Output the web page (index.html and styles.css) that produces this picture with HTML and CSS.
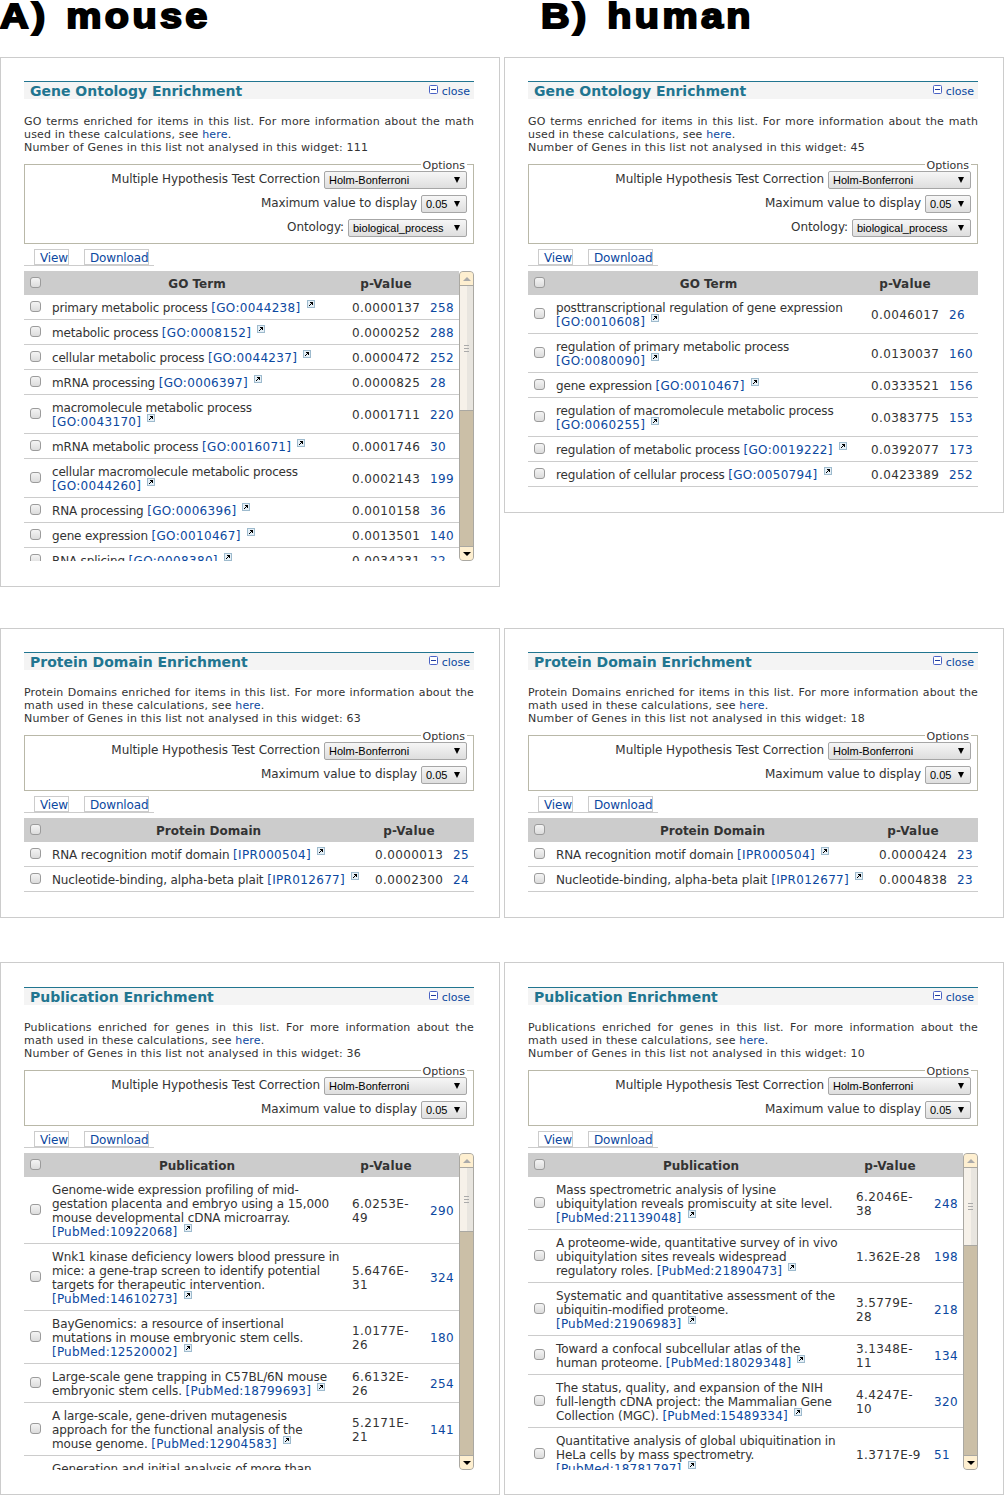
FILE: index.html
```html
<!DOCTYPE html>
<html lang="en">
<head>
<meta charset="utf-8">
<title>Enrichment widgets</title>
<link rel="stylesheet" href="styles.css">
</head>
<body>
<svg class="defs" aria-hidden="true">
<symbol id="ext" viewBox="0 0 8 8"><rect x=".5" y=".5" width="7" height="7" fill="#e6f0f7" stroke="#9dbacd"/><path d="M3 2h3v3H5V4H4v1H3v1H2V5h1V4h1V3H3z" fill="#000"/></symbol>
<symbol id="min" viewBox="0 0 9 9"><rect x=".5" y=".5" width="8" height="8" rx="1" fill="#fff" stroke="#4a62c4"/><path d="M2 4.500h5" stroke="#203a9c"/></symbol>
</svg>
<div class="titles"><h1>A) mouse</h1><h1>B) human</h1></div>

<div class="pair go">
<section class="panel">
<header><h2>Gene Ontology Enrichment</h2><a class="close"><svg><use href="#min"/></svg>close</a></header>
<div class="desc"><p class="just">GO terms enriched for items in this list. For more information about the math</p><p>used in these calculations, see <a>here</a>.</p><p>Number of Genes in this list not analysed in this widget: 111</p></div>
<fieldset><legend>Options</legend>
<div class="opt"><label>Multiple Hypothesis Test Correction</label><span class="sel w1">Holm-Bonferroni</span></div>
<div class="opt"><label>Maximum value to display</label><span class="sel w2">0.05</span></div>
<div class="opt"><label>Ontology:</label><span class="sel w3">biological_process</span></div></fieldset>
<nav><a>View</a><a>Download</a></nav>
<div class="scroll">
<table><tr><th><i class="cb"></i></th><th>GO Term</th><th>p-Value</th><th></th></tr>
<tr><td><i class="cb"></i></td><td>primary metabolic process <a>[GO:0044238]</a><svg><use href="#ext"/></svg></td><td>0.0000137</td><td>258</td></tr>
<tr><td><i class="cb"></i></td><td>metabolic process <a>[GO:0008152]</a><svg><use href="#ext"/></svg></td><td>0.0000252</td><td>288</td></tr>
<tr><td><i class="cb"></i></td><td>cellular metabolic process <a>[GO:0044237]</a><svg><use href="#ext"/></svg></td><td>0.0000472</td><td>252</td></tr>
<tr><td><i class="cb"></i></td><td>mRNA processing <a>[GO:0006397]</a><svg><use href="#ext"/></svg></td><td>0.0000825</td><td>28</td></tr>
<tr><td><i class="cb"></i></td><td>macromolecule metabolic process<br><a>[GO:0043170]</a><svg><use href="#ext"/></svg></td><td>0.0001711</td><td>220</td></tr>
<tr><td><i class="cb"></i></td><td>mRNA metabolic process <a>[GO:0016071]</a><svg><use href="#ext"/></svg></td><td>0.0001746</td><td>30</td></tr>
<tr><td><i class="cb"></i></td><td>cellular macromolecule metabolic process<br><a>[GO:0044260]</a><svg><use href="#ext"/></svg></td><td>0.0002143</td><td>199</td></tr>
<tr><td><i class="cb"></i></td><td>RNA processing <a>[GO:0006396]</a><svg><use href="#ext"/></svg></td><td>0.0010158</td><td>36</td></tr>
<tr><td><i class="cb"></i></td><td>gene expression <a>[GO:0010467]</a><svg><use href="#ext"/></svg></td><td>0.0013501</td><td>140</td></tr>
<tr><td><i class="cb"></i></td><td>RNA splicing <a>[GO:0008380]</a><svg><use href="#ext"/></svg></td><td>0.0034231</td><td>22</td></tr>
</table>
<div class="bar"><b class="up"></b><b class="thumb t1"></b><b class="down"></b></div>
</div>
</section>

<section class="panel">
<header><h2>Gene Ontology Enrichment</h2><a class="close"><svg><use href="#min"/></svg>close</a></header>
<div class="desc"><p class="just">GO terms enriched for items in this list. For more information about the math</p><p>used in these calculations, see <a>here</a>.</p><p>Number of Genes in this list not analysed in this widget: 45</p></div>
<fieldset><legend>Options</legend>
<div class="opt"><label>Multiple Hypothesis Test Correction</label><span class="sel w1">Holm-Bonferroni</span></div>
<div class="opt"><label>Maximum value to display</label><span class="sel w2">0.05</span></div>
<div class="opt"><label>Ontology:</label><span class="sel w3">biological_process</span></div></fieldset>
<nav><a>View</a><a>Download</a></nav>
<table class="wide"><tr><th><i class="cb"></i></th><th>GO Term</th><th>p-Value</th><th></th></tr>
<tr><td><i class="cb"></i></td><td>posttranscriptional regulation of gene expression<br><a>[GO:0010608]</a><svg><use href="#ext"/></svg></td><td>0.0046017</td><td>26</td></tr>
<tr><td><i class="cb"></i></td><td>regulation of primary metabolic process<br><a>[GO:0080090]</a><svg><use href="#ext"/></svg></td><td>0.0130037</td><td>160</td></tr>
<tr><td><i class="cb"></i></td><td>gene expression <a>[GO:0010467]</a><svg><use href="#ext"/></svg></td><td>0.0333521</td><td>156</td></tr>
<tr><td><i class="cb"></i></td><td>regulation of macromolecule metabolic process<br><a>[GO:0060255]</a><svg><use href="#ext"/></svg></td><td>0.0383775</td><td>153</td></tr>
<tr><td><i class="cb"></i></td><td>regulation of metabolic process <a>[GO:0019222]</a><svg><use href="#ext"/></svg></td><td>0.0392077</td><td>173</td></tr>
<tr><td><i class="cb"></i></td><td>regulation of cellular process <a>[GO:0050794]</a><svg><use href="#ext"/></svg></td><td>0.0423389</td><td>252</td></tr>
</table>
</section>
</div>

<div class="pair dom">
<section class="panel">
<header><h2>Protein Domain Enrichment</h2><a class="close"><svg><use href="#min"/></svg>close</a></header>
<div class="desc"><p class="just">Protein Domains enriched for items in this list. For more information about the</p><p>math used in these calculations, see <a>here</a>.</p><p>Number of Genes in this list not analysed in this widget: 63</p></div>
<fieldset><legend>Options</legend>
<div class="opt"><label>Multiple Hypothesis Test Correction</label><span class="sel w1">Holm-Bonferroni</span></div>
<div class="opt"><label>Maximum value to display</label><span class="sel w2">0.05</span></div></fieldset>
<nav><a>View</a><a>Download</a></nav>
<table class="full"><tr><th><i class="cb"></i></th><th>Protein Domain</th><th>p-Value</th><th></th></tr>
<tr><td><i class="cb"></i></td><td>RNA recognition motif domain <a>[IPR000504]</a><svg><use href="#ext"/></svg></td><td>0.0000013</td><td>25</td></tr>
<tr><td><i class="cb"></i></td><td>Nucleotide-binding, alpha-beta plait <a>[IPR012677]</a><svg><use href="#ext"/></svg></td><td>0.0002300</td><td>24</td></tr>
</table>
</section>
<section class="panel">
<header><h2>Protein Domain Enrichment</h2><a class="close"><svg><use href="#min"/></svg>close</a></header>
<div class="desc"><p class="just">Protein Domains enriched for items in this list. For more information about the</p><p>math used in these calculations, see <a>here</a>.</p><p>Number of Genes in this list not analysed in this widget: 18</p></div>
<fieldset><legend>Options</legend>
<div class="opt"><label>Multiple Hypothesis Test Correction</label><span class="sel w1">Holm-Bonferroni</span></div>
<div class="opt"><label>Maximum value to display</label><span class="sel w2">0.05</span></div></fieldset>
<nav><a>View</a><a>Download</a></nav>
<table class="full"><tr><th><i class="cb"></i></th><th>Protein Domain</th><th>p-Value</th><th></th></tr>
<tr><td><i class="cb"></i></td><td>RNA recognition motif domain <a>[IPR000504]</a><svg><use href="#ext"/></svg></td><td>0.0000424</td><td>23</td></tr>
<tr><td><i class="cb"></i></td><td>Nucleotide-binding, alpha-beta plait <a>[IPR012677]</a><svg><use href="#ext"/></svg></td><td>0.0004838</td><td>23</td></tr>
</table>
</section>
</div>

<div class="pair pub">
<section class="panel">
<header><h2>Publication Enrichment</h2><a class="close"><svg><use href="#min"/></svg>close</a></header>
<div class="desc"><p class="just">Publications enriched for genes in this list. For more information about the</p><p>math used in these calculations, see <a>here</a>.</p><p>Number of Genes in this list not analysed in this widget: 36</p></div>
<fieldset><legend>Options</legend>
<div class="opt"><label>Multiple Hypothesis Test Correction</label><span class="sel w1">Holm-Bonferroni</span></div>
<div class="opt"><label>Maximum value to display</label><span class="sel w2">0.05</span></div></fieldset>
<nav><a>View</a><a>Download</a></nav>
<div class="scroll">
<table><tr><th><i class="cb"></i></th><th>Publication</th><th>p-Value</th><th></th></tr>
<tr><td><i class="cb"></i></td><td>Genome-wide expression profiling of mid-<br>gestation placenta and embryo using a 15,000<br>mouse developmental cDNA microarray.<br><a>[PubMed:10922068]</a><svg><use href="#ext"/></svg></td><td>6.0253E-<br>49</td><td>290</td></tr>
<tr><td><i class="cb"></i></td><td>Wnk1 kinase deficiency lowers blood pressure in<br>mice: a gene-trap screen to identify potential<br>targets for therapeutic intervention.<br><a>[PubMed:14610273]</a><svg><use href="#ext"/></svg></td><td>5.6476E-<br>31</td><td>324</td></tr>
<tr><td><i class="cb"></i></td><td>BayGenomics: a resource of insertional<br>mutations in mouse embryonic stem cells.<br><a>[PubMed:12520002]</a><svg><use href="#ext"/></svg></td><td>1.0177E-<br>26</td><td>180</td></tr>
<tr><td><i class="cb"></i></td><td>Large-scale gene trapping in C57BL/6N mouse<br>embryonic stem cells. <a>[PubMed:18799693]</a><svg><use href="#ext"/></svg></td><td>6.6132E-<br>26</td><td>254</td></tr>
<tr><td><i class="cb"></i></td><td>A large-scale, gene-driven mutagenesis<br>approach for the functional analysis of the<br>mouse genome. <a>[PubMed:12904583]</a><svg><use href="#ext"/></svg></td><td>5.2171E-<br>21</td><td>141</td></tr>
<tr><td></td><td>Generation and initial analysis of more than<br>&nbsp;<br>&nbsp;</td><td></td><td></td></tr>
</table>
<div class="bar"><b class="up"></b><b class="thumb t2"></b><b class="down"></b></div>
</div>
</section>
<section class="panel">
<header><h2>Publication Enrichment</h2><a class="close"><svg><use href="#min"/></svg>close</a></header>
<div class="desc"><p class="just">Publications enriched for genes in this list. For more information about the</p><p>math used in these calculations, see <a>here</a>.</p><p>Number of Genes in this list not analysed in this widget: 10</p></div>
<fieldset><legend>Options</legend>
<div class="opt"><label>Multiple Hypothesis Test Correction</label><span class="sel w1">Holm-Bonferroni</span></div>
<div class="opt"><label>Maximum value to display</label><span class="sel w2">0.05</span></div></fieldset>
<nav><a>View</a><a>Download</a></nav>
<div class="scroll">
<table><tr><th><i class="cb"></i></th><th>Publication</th><th>p-Value</th><th></th></tr>
<tr><td><i class="cb"></i></td><td>Mass spectrometric analysis of lysine<br>ubiquitylation reveals promiscuity at site level.<br><a>[PubMed:21139048]</a><svg><use href="#ext"/></svg></td><td>6.2046E-<br>38</td><td>248</td></tr>
<tr><td><i class="cb"></i></td><td>A proteome-wide, quantitative survey of in vivo<br>ubiquitylation sites reveals widespread<br>regulatory roles. <a>[PubMed:21890473]</a><svg><use href="#ext"/></svg></td><td>1.362E-28</td><td>198</td></tr>
<tr><td><i class="cb"></i></td><td>Systematic and quantitative assessment of the<br>ubiquitin-modified proteome.<br><a>[PubMed:21906983]</a><svg><use href="#ext"/></svg></td><td>3.5779E-<br>28</td><td>218</td></tr>
<tr><td><i class="cb"></i></td><td>Toward a confocal subcellular atlas of the<br>human proteome. <a>[PubMed:18029348]</a><svg><use href="#ext"/></svg></td><td>3.1348E-<br>11</td><td>134</td></tr>
<tr><td><i class="cb"></i></td><td>The status, quality, and expansion of the NIH<br>full-length cDNA project: the Mammalian Gene<br>Collection (MGC). <a>[PubMed:15489334]</a><svg><use href="#ext"/></svg></td><td>4.4247E-<br>10</td><td>320</td></tr>
<tr><td><i class="cb"></i></td><td>Quantitative analysis of global ubiquitination in<br>HeLa cells by mass spectrometry.<br><a>[PubMed:18781797]</a><svg><use href="#ext"/></svg></td><td>1.3717E-9</td><td>51</td></tr>
</table>
<div class="bar"><b class="up"></b><b class="thumb t3"></b><b class="down"></b></div>
</div>
</section>
</div>
</body>
</html>
```
FILE: styles.css
```css
* { box-sizing: border-box; }
body { margin: 0; width: 1004px; height: 1495px; overflow: hidden; background: #fff; color: #333; font: 12px/14px "DejaVu Sans", sans-serif; }
.defs { position: absolute; width: 0; height: 0; }
h1, h2, p { margin: 0; }
a { color: #0b48a0; }
.titles { display: grid; grid-template-columns: 541px 1fr; justify-items: start; align-items: start; height: 57px; }
h1 { font: bold 35px/31px "Liberation Sans", Arial, sans-serif; color: #000; letter-spacing: 3px; word-spacing: 3px; -webkit-text-stroke: 2px #000; white-space: nowrap; transform: scaleX(1.13); transform-origin: 0 0; }
.pair { display: grid; grid-template-columns: 500px 500px; gap: 4px; align-items: start; }
.go { height: 571px; }
.dom { height: 334px; }
.panel { border: 1px solid #ccc; padding: 23px 25px 25px 23px; }
.pub .panel { padding-top: 24px; padding-bottom: 24px; }
header { height: 18px; border-top: 1px solid #217590; background: #f4f4f4; display: flex; justify-content: space-between; padding: 0 4px 0 6px; }
h2 { font: bold 14px/18px "DejaVu Sans", sans-serif; color: #217590; letter-spacing: 0; }
.close { font-size: 11px; line-height: 19px; display: flex; }
.close svg { width: 9px; height: 9px; margin: 3px 4px 0 0; }
.desc { margin-top: 16px; font-size: 11px; line-height: 13px; white-space: nowrap; letter-spacing: .17px; }
.just { text-align-last: justify; white-space: normal; letter-spacing: .13px; }
fieldset { margin: 3px 0 0; padding: 0 6px 6px; border: 1px solid #b9b8a8; min-width: 0; }
legend { font-size: 11px; line-height: 13px; margin: 0 0 -1px auto; padding: 2px 2px 0; }
.opt { display: flex; justify-content: flex-end; height: 18px; margin-bottom: 6px; }
.opt:last-child { margin-bottom: 0; }
label { margin-right: 4px; line-height: 16px; letter-spacing: -.08px; }
.sel { height: 18px; border: 1px solid #a6a6a6; border-radius: 2px; background: linear-gradient(#f6f6f6, #dedede); color: #000; font: 11px/17px "Liberation Sans", Arial, sans-serif; padding-left: 4px; display: flex; justify-content: space-between; }
.sel::after { content: ""; border: 3px solid transparent; border-top: 6px solid #000; border-bottom: 0; margin: 5px 6px 0 0; height: 6px; }
.w1 { width: 143px; }
.w2 { width: 46px; }
.w3 { width: 119px; }
nav { display: flex; gap: 15px; width: 130px; height: 17px; margin: 5px 0 5px; padding-left: 10px; border-bottom: 1px solid #ccc; }
nav a { border: 1px solid #ccc; height: 16px; line-height: 16px; padding-left: 5px; width: 35px; white-space: nowrap; letter-spacing: -.16px; }
nav a + a { width: 65px; }
.scroll { display: flex; align-items: flex-start; height: 290px; overflow: hidden; }
.pub .scroll { height: 317px; }
table { border-collapse: separate; border-spacing: 0; table-layout: fixed; width: 435px; white-space: nowrap; }
table.wide, table.full { width: 450px; }
th { background: #ccc; height: 24px; padding: 2px 0 0; }
td { border-bottom: 1px solid #ccc; padding: 6px 0 4px 5px; vertical-align: middle; }
th:first-child, td:first-child { width: 23px; padding: 0 0 0 6px; text-align: left; }
th:nth-child(3) { width: 78px; letter-spacing: .2px; }
th:nth-child(4) { width: 34px; }
.full th:nth-child(4) { width: 26px; }
td:nth-child(2) { letter-spacing: -.18px; }
.dom td:nth-child(2) { letter-spacing: -.12px; }
.pub td:nth-child(2) { letter-spacing: -.1px; }
td:nth-child(2) a { letter-spacing: .33px; }
.pub td:nth-child(2) a { letter-spacing: .2px; }
td:nth-child(3), td:nth-child(4) { letter-spacing: .37px; }
td:nth-child(4) { color: #0b48a0; }
td svg { width: 8px; height: 8px; margin: -1px 0 0 6px; vertical-align: top; }
.cb { display: block; width: 11px; height: 11px; margin-top: -2px; border: 1px solid #9b9b9b; border-radius: 3px; background: linear-gradient(#f4f4f4, #dcdcdc); }
.bar { width: 15px; height: 100%; display: flex; flex-direction: column; background: #cbbfa7; border: 1px solid #aaa8a2; border-radius: 4px; overflow: hidden; }
.bar b { flex: none; }
.up, .down { height: 14px; background: #feefd0; border-bottom: 1px solid #aaa8a2; display: flex; justify-content: center; align-items: center; }
.down { border-bottom: 0; border-top: 1px solid #aaa8a2; margin-top: auto; }
.up::after { content: ""; border: 4px solid transparent; border-top: 0; border-bottom: 4px solid #aaa; }
.down::after { content: ""; border: 4px solid transparent; border-bottom: 0; border-top: 4px solid #000; }
.thumb { background: linear-gradient(90deg, #f6f1e9 55%, #e8e5df 55%); border-bottom: 1px solid #aaa8a2; display: flex; justify-content: center; align-items: center; }
.thumb::after { content: ""; width: 5px; height: 7px; background: repeating-linear-gradient(#aaa 0 1px, transparent 1px 3px); }
.t1 { height: 125px; }
.t2 { height: 64px; }
.t3 { height: 78px; }
```
